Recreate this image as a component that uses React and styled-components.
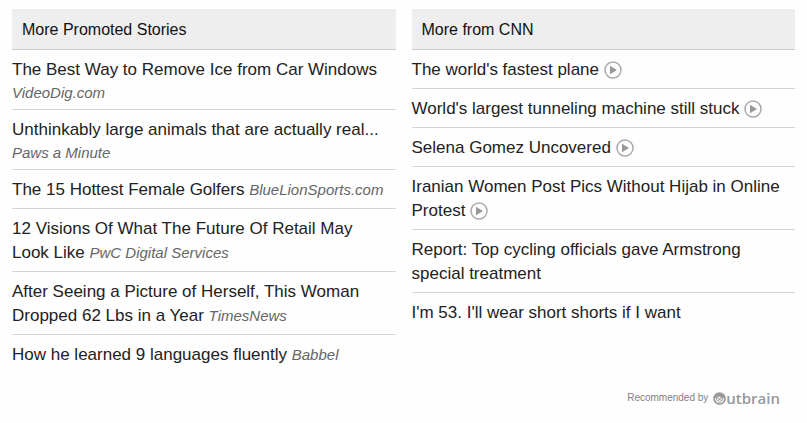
import React from 'react';
import styled, { createGlobalStyle, css } from 'styled-components';

const GlobalStyle = createGlobalStyle`
  body {
    margin: 0;
    background: #fefefe;
    color: #222;
    font-family: 'Liberation Sans', Arial, sans-serif;
  }
`;

const Widget = styled.main`
  padding: 9px 12px 0;
`;
const Columns = styled.div`
  display: grid;
  grid-template-columns: 1fr 1fr;
  column-gap: 16px;
  align-items: start;
`;
const Heading = styled.h2`
  margin: 0;
  padding: 9px 10px 7px;
  border-bottom: 1px solid #ccc;
  background: #eee;
  color: #111;
  font-size: 16px;
  font-weight: 400;
  line-height: 24px;
`;
const List = styled.ul`
  margin: 0;
  padding: 0;
  list-style: none;
`;
const Story = styled.li`
  padding: 8px 4px 6px 0;
  font-size: 17px;
  line-height: 24px;
  & + & {
    border-top: 1px solid #d4d4d4;
  }
`;
const StoryLink = styled.a`
  color: inherit;
  text-decoration: none;
`;
const Source = styled.em`
  color: #666;
  font-size: 15px;
  line-height: 20px;
  ${(props) =>
    props.$block &&
    css`
      display: block;
      line-height: 21px;
    `}
`;
const PlayIcon = styled.svg`
  width: 18px;
  height: 18px;
  vertical-align: -4px;
`;
const Footer = styled.footer`
  display: flex;
  justify-content: flex-end;
  align-items: center;
  gap: 5px;
  padding: 15px 15px 12px 0;
  color: #808080;
  font-size: 10px;
  line-height: 20px;
`;
const BrandLink = styled.a`
  display: flex;
  align-items: center;
  color: #999;
  font-family: 'Open Sans', sans-serif;
  font-size: 15px;
  font-weight: 600;
  text-decoration: none;
`;

const Play = () => (
  <PlayIcon viewBox="0 0 18 18" role="img" aria-label="Video">
    <circle cx="9" cy="9" r="8" fill="none" stroke="#aaa" strokeWidth="1.5" />
    <path d="M6 4.8 13 9l-7 4.2Z" fill="#999" />
  </PlayIcon>
);

const BrandIcon = () => (
  <svg width="13" height="13" viewBox="0 0 13 13" aria-hidden="true">
    <circle cx="6.5" cy="6.5" r="6.3" fill="#999" />
    <path
      d="M1.8 6.2C4 6.2 5.2 5.2 6 4c1.2 1.4 2.8 2.1 5.2 2.2-.1 2.9-2 5.1-4.7 5.1S2 9.2 1.8 6.2Z"
      fill="#eee"
    />
    <g fill="none" stroke="#999" strokeWidth="0.8">
      <circle cx="4.6" cy="7.2" r="1.3" />
      <circle cx="8.3" cy="7.2" r="1.3" />
      <path d="M5.9 7h1.1M5 9.8q1.5.7 3 0" />
    </g>
  </svg>
);

const promoted = [
  {
    title: 'The Best Way to Remove Ice from Car Windows',
    source: 'VideoDig.com',
    block: true,
  },
  {
    title: 'Unthinkably large animals that are actually real...',
    source: 'Paws a Minute',
    block: true,
  },
  { title: 'The 15 Hottest Female Golfers', source: 'BlueLionSports.com' },
  {
    title: '12 Visions Of What The Future Of Retail May Look Like',
    source: 'PwC Digital Services',
  },
  {
    title:
      'After Seeing a Picture of Herself, This Woman Dropped 62 Lbs in a Year',
    source: 'TimesNews',
  },
  { title: 'How he learned 9 languages fluently', source: 'Babbel' },
];

const cnn = [
  { title: "The world's fastest plane", video: true },
  { title: "World's largest tunneling machine still stuck", video: true },
  { title: 'Selena Gomez Uncovered', video: true },
  {
    title: 'Iranian Women Post Pics Without Hijab in Online Protest',
    video: true,
  },
  { title: 'Report: Top cycling officials gave Armstrong special treatment' },
  { title: "I'm 53. I'll wear short shorts if I want" },
];

const StoryColumn = ({ title, stories }) => (
  <section>
    <Heading>{title}</Heading>
    <List>
      {stories.map((story) => (
        <Story key={story.title}>
          <StoryLink href="#">
            {story.title} {story.video && <Play />}
            {story.source && (
              <Source $block={story.block}>{story.source}</Source>
            )}
          </StoryLink>
        </Story>
      ))}
    </List>
  </section>
);

const App = () => (
  <>
    <GlobalStyle />
    <Widget>
      <Columns>
        <StoryColumn title="More Promoted Stories" stories={promoted} />
        <StoryColumn title="More from CNN" stories={cnn} />
      </Columns>
      <Footer>
        Recommended by
        <BrandLink href="#" aria-label="Outbrain">
          <BrandIcon />
          utbrain
        </BrandLink>
      </Footer>
    </Widget>
  </>
);

export default App;
